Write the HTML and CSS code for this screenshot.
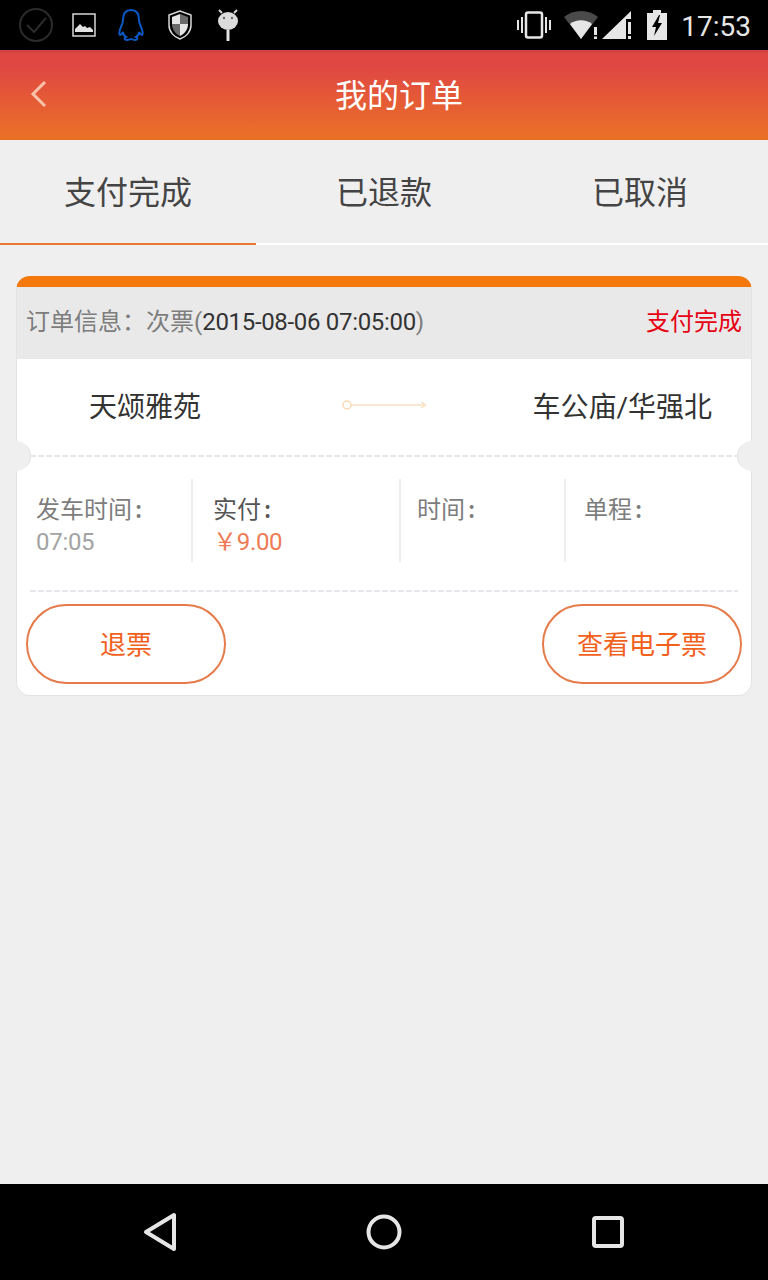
FILE: index.html
```html
<!DOCTYPE html>
<html lang="zh-CN">
<head>
  <meta charset="UTF-8" />
  <meta name="viewport" content="width=device-width, initial-scale=1" />
  <title>我的订单</title>
  <link rel="stylesheet" href="styles.css">
</head>
<body>
  <div class="page">
    <!-- Status bar -->
    <div class="status-bar">
      <div class="status-left">
        <svg class="ico-check" width="36" height="36" viewBox="0 0 36 36"><circle cx="18" cy="18" r="16" fill="none" stroke="#2b2b2b" stroke-width="2"/><path d="M9 18l7 7 12-14" fill="none" stroke="#2b2b2b" stroke-width="2"/></svg>
        <svg class="ico-image" width="24" height="24" viewBox="0 0 24 24"><rect x="1" y="1" width="22" height="22" fill="none" stroke="#d8d8d8" stroke-width="1.500"/><path d="M3 19l0-3 5-5 3 3 2-1 2 2 3-1 3 3v2z" fill="#e2e2e2"/></svg>
        <svg class="ico-qq" width="28" height="32" viewBox="0 0 28 32"><path d="M14 1c-6 0-8 5-8 10 0 3-1 4-2 7-2 4-2 8-1 8s2-1 3-3c0 3 1 4 3 5-2 1-2 3 1 3 2 0 3-1 4-1s2 1 4 1c3 0 3-2 1-3 2-1 3-2 3-5 1 2 2 3 3 3s1-4-1-8c-1-3-2-4-2-7 0-5-2-10-8-10z" fill="none" stroke="#0b57c4" stroke-width="2"/></svg>
        <svg class="ico-shield" width="24" height="30" viewBox="0 0 24 30"><path d="M12 1L1 5v10c0 7 5 12 11 14 6-2 11-7 11-14V5z" fill="#000" stroke="#d8d8d8" stroke-width="1.500"/><path d="M12 4L4 7v7h8zM12 14v12c4-2 8-6 8-12z" fill="#e6e6e6"/><path d="M12 4v10h8V7zM12 14H4c0 6 4 10 8 12z" fill="#6a6a6a"/></svg>
        <svg class="ico-droid" width="22" height="32" viewBox="0 0 22 32"><path d="M5 4L2 1M17 4l3-3" stroke="#d8d8d8" stroke-width="2"/><ellipse cx="11" cy="12" rx="10" ry="9" fill="#dcdcdc"/><circle cx="7" cy="9" r="1.2" fill="#666"/><circle cx="15" cy="9" r="1.2" fill="#666"/><rect x="9.500" y="21" width="3" height="11" fill="#e2e2e2"/></svg>
      </div>
      <div class="status-right">
        <svg class="ico-vibrate" width="36" height="28" viewBox="0 0 36 28"><rect x="10" y="1.500" width="16" height="25" rx="2" fill="none" stroke="#e6e6e6" stroke-width="2.500"/><path d="M1 9h2v10H1zM5 6h2v16H5zM33 9h2v10h-2zM29 6h2v16h-2z" fill="#e6e6e6"/></svg>
        <svg class="ico-wifi" width="36" height="28" viewBox="0 0 36 28"><path d="M0 6C9-2 25-2 34 6L17 28z" fill="#4a4a4a"/><path d="M6 13c6-5 16-5 22 0L17 28z" fill="#e6e6e6"/><path d="M30 16h3v8h-3zM30 25.500h3V28h-3z" fill="#e6e6e6"/></svg>
        <svg class="ico-signal" width="29" height="28" viewBox="0 0 29 28"><path d="M0 28L29 0v8h-5v20z" fill="#e6e6e6"/><path d="M26 11h3v12h-3zM26 25h3v3h-3z" fill="#e6e6e6"/></svg>
        <svg class="ico-battery" width="20" height="30" viewBox="0 0 20 30"><path d="M6 0h8v3h6v27H0V3h6z" fill="#e6e6e6"/><path d="M12 5L5 17h4l-2 9 8-13h-4l2-8z" fill="#000"/></svg>
        <span class="clock">17:53</span>
      </div>
    </div>

    <!-- Title bar -->
    <div class="title-bar">
      <svg class="back" width="20" height="28" viewBox="0 0 20 28"><path d="M16 2L4 14l12 12" fill="none" stroke="#f9c2ab" stroke-width="3"/></svg>
      <h1>我的订单</h1>
    </div>

    <!-- Tabs -->
    <div class="tabs">
      <div class="tab active">支付完成</div>
      <div class="tab">已退款</div>
      <div class="tab">已取消</div>
    </div>

    <div class="content">
      <div class="order-card">
        <div class="order-head">
          <span class="order-info">订单信息：次票(<b>2015-08-06 07:05:00</b>)</span>
          <span class="order-state">支付完成</span>
        </div>

        <div class="route">
          <span class="route-name">天颂雅苑</span>
          <svg class="route-arrow" width="86" height="12" viewBox="0 0 86 12"><circle cx="5" cy="6" r="4" fill="none" stroke="#f8d9b4" stroke-width="1.500"/><path d="M9 6h75M80 3l4 3-4 3" fill="none" stroke="#f8dfc2" stroke-width="1.500"/></svg>
          <span class="route-name">车公庙/华强北</span>
        </div>

        <div class="dash notch-line">
          <span class="notch notch-left"></span>
          <span class="notch notch-right"></span>
        </div>

        <div class="details">
          <div class="col col-depart">
            <div class="label">发车时间<span class="colon">:</span></div>
            <div class="value">07:05</div>
          </div>
          <div class="col col-paid">
            <div class="label dark">实付<span class="colon">:</span></div>
            <div class="value price">￥9.00</div>
          </div>
          <div class="col col-time">
            <div class="label">时间<span class="colon">:</span></div>
          </div>
          <div class="col col-trip">
            <div class="label">单程<span class="colon">:</span></div>
          </div>
        </div>

        <div class="dash"></div>

        <div class="actions">
          <div class="pill">退票</div>
          <div class="pill">查看电子票</div>
        </div>
      </div>
    </div>

    <!-- Nav bar -->
    <div class="nav-bar">
      <svg width="36" height="40" viewBox="0 0 36 40"><path d="M31 3v34L3 20z" fill="none" stroke="#e6e6e6" stroke-width="4" stroke-linejoin="round"/></svg>
      <svg class="nav-home" width="36" height="36" viewBox="0 0 36 36"><circle cx="18" cy="18" r="15.500" fill="none" stroke="#e6e6e6" stroke-width="4"/></svg>
      <svg class="nav-recent" width="32" height="32" viewBox="0 0 32 32"><rect x="2" y="2" width="28" height="28" rx="2" fill="none" stroke="#e6e6e6" stroke-width="4"/></svg>
    </div>
  </div>
</body>
</html>
```

FILE: styles.css
```css
* {
  box-sizing: border-box;
}
body {
  margin: 0;
  font-family: Roboto, 'Noto Sans CJK SC', sans-serif;
  background: #efefef;
}
.page {
  width: 768px;
  height: 1280px;
  display: flex;
  flex-direction: column;
  overflow: hidden;
}

/* status bar */
.status-bar {
  height: 50px;
  background: #000;
  display: flex;
  align-items: center;
  justify-content: space-between;
  padding: 0 17px 0 18px;
}
.status-left,
.status-right {
  display: flex;
  align-items: center;
}
.ico-image {
  margin-left: 18px;
}
.ico-qq {
  margin-left: 21px;
}
.ico-shield {
  margin-left: 23px;
}
.ico-droid {
  margin-left: 25px;
}
.ico-wifi {
  margin-left: 12px;
}
.ico-signal {
  margin-left: 2px;
}
.ico-battery {
  margin-left: 16px;
}
.clock {
  margin: 3px 0 0 14px;
  font-size: 28px;
  color: #e6e6e6;
  line-height: 44px;
}

/* title bar */
.title-bar {
  height: 90px;
  display: flex;
  align-items: center;
  justify-content: center;
  position: relative;
  background: linear-gradient(#c9403a, #df4543 4%, #e04842 20%, #eb7126);
}
.title-bar h1 {
  margin: 0 0 4px 30px;
  font-size: 32px;
  font-weight: 400;
  color: #fff;
}
.back {
  position: absolute;
  left: 29px;
  top: 30px;
}

/* tabs */
.tabs {
  height: 105px;
  display: flex;
  border-bottom: 2px solid #fff;
}
.tab {
  flex: 1;
  height: 105px;
  line-height: 107px;
  text-align: center;
  font-size: 32px;
  color: #444;
}
.tab.active {
  border-bottom: 2px solid #e8762e;
}

/* order card */
.content {
  flex: 1;
  padding: 31px 16px 0;
}
.order-card {
  width: 736px;
  background: #fff;
  border: 1px solid #e3e3e3;
  border-top: 11px solid #f5780c;
  border-radius: 14px;
}
.order-head {
  height: 72px;
  display: flex;
  align-items: center;
  justify-content: space-between;
  padding: 0 9px 8px 9px;
  background: #e9e9e9;
  font-size: 24px;
}
.order-info {
  color: #7d7d7d;
}
.order-info b {
  font-weight: 400;
  color: #333;
  letter-spacing: -0.32px;
}
.order-state {
  color: #e60012;
}
.route {
  height: 96px;
  display: flex;
  align-items: center;
  padding: 0 39px 4px 72px;
  font-size: 28px;
  color: #333;
}
.route-name {
  white-space: nowrap;
}
.route-arrow {
  margin: 0 105px 0 141px;
}
.dash {
  height: 2px;
  margin: 0 13px;
  background: repeating-linear-gradient(90deg, #e4e7ec 0 6px, transparent 6px 8px);
}
.notch-line {
  position: relative;
}
.notch {
  position: absolute;
  top: -14px;
  width: 30px;
  height: 30px;
  border-radius: 50%;
  background: #efefef;
  border: 1px solid transparent;
}
.notch-left {
  left: -29px;
  border-right-color: #e3e3e3;
}
.notch-right {
  right: -29px;
  border-left-color: #e3e3e3;
}
.details {
  display: flex;
  height: 133px;
  padding-top: 22px;
}
.col {
  height: 83px;
  padding-top: 12px;
  font-size: 24px;
  line-height: 33px;
  border-right: 2px solid #eee;
}
.col-depart {
  width: 176px;
  padding-left: 19px;
}
.col-paid {
  width: 208px;
  padding-left: 20px;
}
.col-time {
  width: 165px;
  padding-left: 16px;
}
.col-trip {
  padding-left: 18px;
  border-right: none;
}
.label {
  height: 35px;
  font-family: 'Noto Sans CJK SC', sans-serif;
  color: #7d7d7d;
}
.label.dark {
  color: #555;
}
.colon {
  margin-left: 3px;
  font-weight: 500;
}
.value {
  color: #a3a3a3;
  letter-spacing: -0.3px;
}
.value.price {
  color: #ee7b55;
}
.actions {
  display: flex;
  justify-content: space-between;
  padding: 12px 9px 11px;
}
.pill {
  width: 200px;
  height: 80px;
  line-height: 78px;
  text-align: center;
  border: 2px solid #e57a4a;
  border-radius: 40px;
  font-size: 26px;
  color: #f2611c;
}

/* nav bar */
.nav-bar {
  height: 96px;
  background: #000;
  display: flex;
  align-items: center;
  padding-left: 143px;
}
.nav-home {
  margin-left: 187px;
}
.nav-recent {
  margin-left: 190px;
}
```
